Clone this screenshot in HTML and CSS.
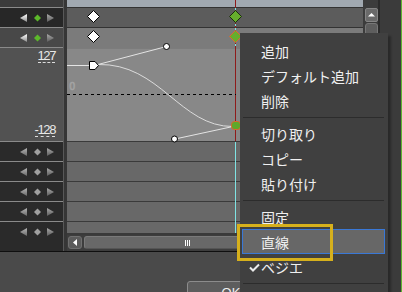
FILE: index.html
```html
<!DOCTYPE html>
<html lang="ja">
<head>
  <meta charset="UTF-8">
  <meta name="viewport" content="width=device-width, initial-scale=1">
  <title>カーブエディタ</title>
  <link rel="stylesheet" href="styles.css">
</head>
<body>
  <!-- shared icon parts -->
  <svg class="defs" width="0" height="0">
    <defs>
      <linearGradient id="leftOn" x1="0" y1="0" x2="0" y2="1">
        <stop offset="0" stop-color="#ffffff"/>
        <stop offset="1" stop-color="#8c8c8c"/>
      </linearGradient>
      <linearGradient id="leftOff" x1="0" y1="0" x2="0" y2="1">
        <stop offset="0" stop-color="#b4b4b4"/>
        <stop offset="1" stop-color="#6a6a6a"/>
      </linearGradient>
      <linearGradient id="rightArrow" x1="0" y1="0" x2="0" y2="1">
        <stop offset="0" stop-color="#a8a8a8"/>
        <stop offset="1" stop-color="#5c5c5c"/>
      </linearGradient>
      <symbol id="navOn" viewBox="0 0 36 10">
        <polygon points="1,5 8,1 8,9" fill="url(#leftOn)"/>
        <polygon points="18.5,1.5 22,5 18.5,8.5 15,5" fill="#5cb82a"/>
        <polygon points="28,1 35,5 28,9" fill="url(#rightArrow)"/>
      </symbol>
      <symbol id="navOff" viewBox="0 0 36 10">
        <polygon points="1,5 8,1 8,9" fill="url(#leftOff)"/>
        <polygon points="18.5,1.5 22,5 18.5,8.5 15,5" fill="#a0a0a0"/>
        <polygon points="28,1 35,5 28,9" fill="url(#rightArrow)"/>
      </symbol>
    </defs>
  </svg>

  <div class="window">
    <div class="main">
      <div class="editor">
        <div class="labels">
          <div class="lab-top"></div>
          <div class="lab-row key1"><svg class="nav"><use href="#navOn"/></svg></div>
          <div class="lab-row key2"><svg class="nav"><use href="#navOn"/></svg></div>
          <div class="lab-range">
            <span class="val">127</span>
            <span class="val">-128</span>
          </div>
          <div class="lab-row"><svg class="nav"><use href="#navOff"/></svg></div>
          <div class="lab-row"><svg class="nav"><use href="#navOff"/></svg></div>
          <div class="lab-row"><svg class="nav"><use href="#navOff"/></svg></div>
          <div class="lab-row"><svg class="nav"><use href="#navOff"/></svg></div>
          <div class="lab-row last"><svg class="nav"><use href="#navOff"/></svg></div>
        </div>

        <div class="divider"></div>

        <div class="graph">
          <div class="g-top"></div>
          <div class="g-row key1"></div>
          <div class="g-row key2"></div>
          <div class="g-curve"></div>
          <div class="g-track"></div>
          <div class="g-track"></div>
          <div class="g-track"></div>
          <div class="g-track"></div>
          <div class="g-track last"></div>
          <div class="hscroll">
            <div class="hs-btn">
              <svg width="12" height="11" viewBox="0 0 12 11"><polygon points="4,5.5 8,2 8,9" fill="#fff"/></svg>
            </div>
            <div class="hs-thumb"><span class="grip"></span><span class="grip"></span><span class="grip"></span></div>
          </div>

          <svg class="curves" viewBox="67 0 296 233">
            <line x1="235.5" y1="0" x2="235.5" y2="141" stroke="#8e1b1b"/>
            <line x1="235.5" y1="8" x2="235.5" y2="48" stroke="#7fe3e3" stroke-dasharray="2 2"/>
            <line x1="235.5" y1="142" x2="235.5" y2="233" stroke="#7fe3e3"/>
            <line x1="67" y1="94.5" x2="236" y2="94.5" stroke="#000" stroke-dasharray="3 3"/>
            <text class="zero" x="69.5" y="90">0</text>

            <polygon points="93.5,10.5 99.5,16.5 93.5,22.5 87.5,16.5" fill="#fff" stroke="#000"/>
            <polygon points="93.5,30.5 99.5,36.5 93.5,42.5 87.5,36.5" fill="#fff" stroke="#000"/>
            <polygon points="235.5,10.5 241.5,16.5 235.5,22.5 229.5,16.5" fill="#66ad2c" stroke="#1c2e0c"/>
            <polygon points="235.5,30.5 241.5,36.5 235.5,42.5 229.5,36.5" fill="#66ad2c" stroke="#e2642b"/>

            <line x1="67" y1="65.5" x2="90" y2="65.5" stroke="#e4e4e4"/>
            <path d="M98 64.5 C160 63 180 127 233 126.5" fill="none" stroke="#dcdcdc"/>
            <line x1="98" y1="64.5" x2="166.5" y2="46.5" stroke="#e4e4e4"/>
            <line x1="233" y1="126.5" x2="175" y2="139" stroke="#e4e4e4"/>
            <circle cx="166.5" cy="46.5" r="3" fill="#fff" stroke="#000"/>
            <circle cx="174.5" cy="139" r="3" fill="#fff" stroke="#000"/>
            <path d="M89.5 61.5 H95 L98.5 65.5 L95 69.5 H89.5 Z" fill="#fff" stroke="#000"/>
            <rect x="231.5" y="121.5" width="9" height="8" rx="3" fill="#5fa82a" stroke="#e2642b"/>
          </svg>
        </div>

        <div class="vscroll">
          <div class="vs-btn">
            <svg width="11" height="12" viewBox="0 0 11 12"><polygon points="5.5,4 9,7.5 2,7.5" fill="#fff"/></svg>
          </div>
          <div class="vs-thumb"></div>
        </div>
      </div>

      <div class="footer">
        <button class="ok">OK</button>
      </div>
    </div>
    <div class="gutter"></div>
  </div>

  <!-- context menu -->
  <div class="menu">
    <div class="item"><span class="tick"></span>追加</div>
    <div class="item"><span class="tick"></span>デフォルト追加</div>
    <div class="item"><span class="tick"></span>削除</div>
    <div class="sep"></div>
    <div class="item"><span class="tick"></span>切り取り</div>
    <div class="item"><span class="tick"></span>コピー</div>
    <div class="item"><span class="tick"></span>貼り付け</div>
    <div class="sep"></div>
    <div class="item"><span class="tick"></span>固定</div>
    <div class="item active"><span class="tick"></span>直線</div>
    <div class="item">
      <span class="tick"><svg width="19" height="12" viewBox="0 0 19 12"><polyline points="8,6.5 11,9.5 17,3.5" fill="none" stroke="#ececec" stroke-width="2"/></svg></span>ベジエ
    </div>
    <div class="sep"></div>
  </div>

  <div class="callout"></div>
</body>
</html>
```

FILE: styles.css
```css
* {
  box-sizing: border-box;
}

body {
  margin: 0;
  width: 402px;
  height: 292px;
  overflow: hidden;
  position: relative;
  background: #4a4a4a;
  font-family: 'Liberation Sans', Arial, sans-serif;
}

.defs {
  position: absolute;
}

.window {
  display: flex;
  height: 292px;
}

.main {
  width: 378px;
  display: flex;
  flex-direction: column;
}

.editor {
  height: 251px;
  display: flex;
}

/* left label column */
.labels {
  width: 63px;
  display: flex;
  flex-direction: column;
}

.lab-top {
  height: 8px;
  background: #3b3b3b;
  border-bottom: 1px solid #8a8a8a;
}

.lab-row {
  height: 20px;
  background: #2a2a2a;
  border-bottom: 1px solid #8a8a8a;
  display: flex;
  align-items: center;
  justify-content: flex-end;
  padding-right: 8px;
}

.lab-row.key1 { background: #272727; }
.lab-row.key2 { background: #484848; }

.lab-row.last {
  height: 29px;
  border-bottom: none;
  align-items: flex-start;
  padding-top: 5px;
}

.nav {
  width: 36px;
  height: 10px;
}

.lab-range {
  height: 94px;
  background: #525252;
  border-bottom: 1px solid #8a8a8a;
  display: flex;
  flex-direction: column;
  align-items: flex-end;
  justify-content: space-between;
  padding: 2px 8px 4px 0;
}

.val {
  font-size: 13px;
  line-height: 12px;
  letter-spacing: -1.4px;
  color: #e8e8e8;
  border-bottom: 1px dashed #dcdcdc;
}

.divider {
  width: 4px;
  background: #363636;
  border-left: 1px solid #585858;
}

/* graph column */
.graph {
  width: 296px;
  position: relative;
  display: flex;
  flex-direction: column;
}

.g-top {
  height: 8px;
  background: #a1a9b1;
  border-bottom: 1px solid #333;
}

.g-row {
  height: 20px;
}

.g-row.key1 {
  background: #5c5c5c;
  border-bottom: 1px solid #333;
}

.g-row.key2 {
  background: #7b7b7b;
}

.g-curve {
  height: 94px;
  background: #888;
  border-top: 1px solid #7c7c7c;
  border-bottom: 1px solid #3a3a3a;
}

.g-track {
  height: 20px;
  background: #686868;
  border-bottom: 1px solid #3a3a3a;
}

.g-track.last {
  height: 13px;
  border-bottom: 2px solid #3a3a3a;
}

.hscroll {
  height: 16px;
  background: #3d3d3d;
  display: flex;
  gap: 2px;
  padding: 1px 0 2px 1px;
}

.hs-btn {
  width: 14px;
  background: #5b5b5b;
  border: 1px solid #707070;
  border-radius: 3px;
  display: flex;
  align-items: center;
}

.hs-thumb {
  width: 206px;
  background: #686868;
  border: 1px solid #7a7a7a;
  border-bottom-color: #555;
  border-radius: 3px;
  display: flex;
  justify-content: center;
  align-items: center;
  gap: 1px;
}

.grip {
  width: 1px;
  height: 6px;
  background: #fff;
}

.curves {
  position: absolute;
  top: 0;
  left: 0;
  width: 296px;
  height: 233px;
  pointer-events: none;
}

.zero {
  font-family: 'Liberation Sans', sans-serif;
  font-size: 10px;
  fill: #8a8a8a;
  stroke: #a8a8a8;
  stroke-width: 0.6;
}

/* vertical scrollbar */
.vscroll {
  width: 15px;
  background: #3c3c3c;
  padding: 8px 0 0 2px;
  display: flex;
  flex-direction: column;
  gap: 1px;
}

.vs-btn {
  height: 14px;
  background: #6a6a6a;
  border: 1px solid #858585;
  border-radius: 2px;
  display: flex;
  align-items: center;
}

.vs-thumb {
  flex: 1;
  background: #5e5e5e;
  border: 1px solid #777;
  border-radius: 3px;
}

.footer {
  flex: 1;
  background: #4a4a4a;
  border-top: 1px solid #0f0f0f;
  padding: 29px 0 0 187px;
}

.ok {
  width: 88px;
  height: 24px;
  padding: 0;
  background: #5d5d5d;
  border: 1px solid #8c8c8c;
  border-radius: 3px;
  color: #f0f0f0;
  font-family: 'Liberation Sans', Arial, sans-serif;
  font-size: 13px;
  line-height: 16px;
  display: block;
  text-align: center;
}

.gutter {
  width: 24px;
  background: #3b3b3b;
  border-left: 2px solid #2b2b2b;
  border-right: 1px solid #5db52f;
}

/* context menu */
.menu {
  position: absolute;
  left: 240px;
  top: 33px;
  width: 148px;
  height: 262px;
  background: #404040;
  padding-top: 5px;
  box-shadow: 3px 3px 2px rgba(0,0,0,0.3);
  font-family: 'Noto Sans CJK JP', sans-serif;
  font-size: 14px;
  color: #f0f0f0;
}

.item {
  height: 25px;
  margin: 0 3px 0 2px;
  display: flex;
  align-items: center;
  white-space: nowrap;
}

.item.active {
  background: #676767;
  box-shadow: inset 0 0 0 1px #3a78d6;
}

.tick {
  width: 19px;
  flex: none;
  display: flex;
  align-items: center;
}

.sep {
  height: 1px;
  margin: 4px 4px 3px 3px;
  background: #2c2c2c;
}

.callout {
  position: absolute;
  left: 237px;
  top: 224px;
  width: 96px;
  height: 37px;
  border: 3px solid #d6b01c;
}
```
